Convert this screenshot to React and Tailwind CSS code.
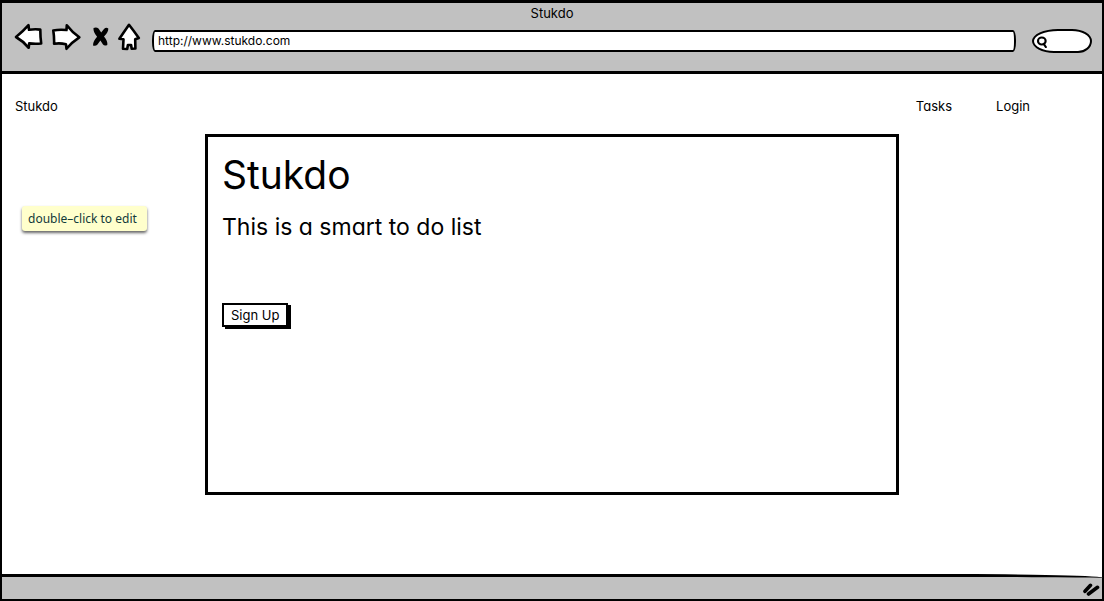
const iconButton = "block shrink-0 cursor-pointer";
const outline = {
  fill: "white",
  stroke: "black",
  strokeWidth: 2.6,
  strokeLinejoin: "round",
  strokeLinecap: "round",
};

function BackIcon() {
  return (
    <svg width="30" height="28" viewBox="0 0 30 28" aria-hidden="true">
      <path {...outline} d="M2 14Q9 8.500 14.500 2.200L15 6.800Q21 5.900 26.300 6.600 26.300 14 27.200 20.500 21 21 15.200 20.400L14.700 24.800Q9 18 2 14Z" />
    </svg>
  );
}

function ForwardIcon() {
  return (
    <svg width="30" height="28" viewBox="1 0 30 28" aria-hidden="true">
      <path {...outline} d="M2.300 7.500Q8 6.200 15.500 7L15.800 2.200Q21 9 28.300 14.300 21 19 15.500 25.800L15 21.300Q9 19.800 3.100 20.800 3.300 14 2.300 7.500Z" />
    </svg>
  );
}

function StopIcon() {
  return (
    <svg width="20" height="20" viewBox="-2 0 20 20" aria-hidden="true">
      <path d="M1.500 1Q4.500 0 6.500 1.500L9.200 5.500 12 2Q14 0 16.300 1.500 16.600 5 12 9.600 16 14.500 15.300 18 12.500 19.300 11 17.600L8.400 13.400 5.500 17.500Q3.500 19.500 1 18.400 0.800 14.500 5.100 9.800 1 5 1.500 1Z" />
    </svg>
  );
}

function HomeIcon() {
  return (
    <svg width="24" height="28" viewBox="0 0 24 28" aria-hidden="true">
      <path {...outline} d="M11 1.800Q15.500 7.500 20.800 15L17.200 16.300 17.400 25.500 13.700 25.800 13.100 22 9.900 22 9.200 26 5 25.800 5.500 16.300 1.400 15.800Q6 9 11 1.800Z" />
    </svg>
  );
}

function SearchIcon() {
  return (
    <svg width="12" height="13" viewBox="0 0 12 13" fill="none" stroke="black" strokeWidth="2.200" strokeLinecap="round" aria-hidden="true">
      <ellipse cx="5.800" cy="6" rx="3.800" ry="3.500" />
      <path d="M7.800 9 9.800 12" />
    </svg>
  );
}

function ResizeGrip() {
  return (
    <svg width="18" height="14" viewBox="0 0 18 14" stroke="black" strokeWidth="3.600" strokeLinecap="round" aria-hidden="true">
      <path d="M3 8.300 8.500 2.300M6.500 11 15.500 4.300" />
    </svg>
  );
}

export default function App() {
  return (
    <div className="relative flex min-h-screen flex-col border-x-2 border-b-2 border-t-3 border-black bg-white font-['Inter','Liberation_Sans',sans-serif] text-[13px] leading-5 text-black [font-feature-settings:'cv11']">
      <header className="border-b-3 border-black bg-[#c1c1c1] pb-3">
        <div className="text-center">Stukdo</div>
        <div className="flex items-center pl-3 pr-2.5">
          <div className="flex items-center gap-2 pb-2">
            <button className={iconButton} aria-label="Back"><BackIcon /></button>
            <button className={iconButton} aria-label="Forward"><ForwardIcon /></button>
            <button className={iconButton} aria-label="Stop"><StopIcon /></button>
            <button className={iconButton} aria-label="Home"><HomeIcon /></button>
          </div>
          <input
            type="text"
            aria-label="Address"
            defaultValue="http://www.stukdo.com"
            className="ml-2.5 h-[22px] min-w-0 flex-1 rounded-[3px/10px] border-2 border-black bg-white px-1 pb-0.5 text-[12px] outline-none"
          />
          <label className="ml-4 flex h-6 w-15 shrink-0 items-center rounded-[26px_20px_14px_22px/12px] border-2 border-black bg-white pl-0.5">
            <SearchIcon />
            <input type="text" aria-label="Search" className="w-8 bg-transparent outline-none" />
          </label>
        </div>
      </header>

      <nav className="flex items-center justify-between pl-[13px] pr-18 pt-[22px]">
        <a href="#">Stukdo</a>
        <div className="flex gap-11">
          <a href="#tasks">Tasks</a>
          <a href="#login">Login</a>
        </div>
      </nav>

      <main className="flex-1 px-4 pb-16 pt-[18px]">
        <section className="mx-auto min-h-[361px] max-w-[694px] border-[3px] border-black px-3.5 pt-3.5">
          <h1 className="text-[39px] leading-12">Stukdo</h1>
          <p className="mt-3 text-[23px] leading-8">This is a smart to do list</p>
          <button className="mt-15 block h-6 cursor-pointer border-2 border-black bg-white px-[7px] leading-5 shadow-[3px_2px_0_black]">
            Sign Up
          </button>
        </section>
      </main>

      <footer className="-mr-0.5 flex h-[25px] items-center justify-end rounded-tr-[160px_4px] border-r-2 border-t-3 border-black bg-[#c1c1c1] pr-0.5 pt-1">
        <ResizeGrip />
      </footer>

      <div
        role="note"
        className="absolute left-5 top-[203px] rounded-[3px] bg-[#ffffcc] py-0.5 pl-1.5 pr-2.5 font-['Noto_Sans',sans-serif] text-[12px] leading-[21px] text-[#123a3a] shadow-[0_2px_3px_rgba(0,0,0,0.6)]"
      >
        double–click to edit
      </div>
    </div>
  );
}
